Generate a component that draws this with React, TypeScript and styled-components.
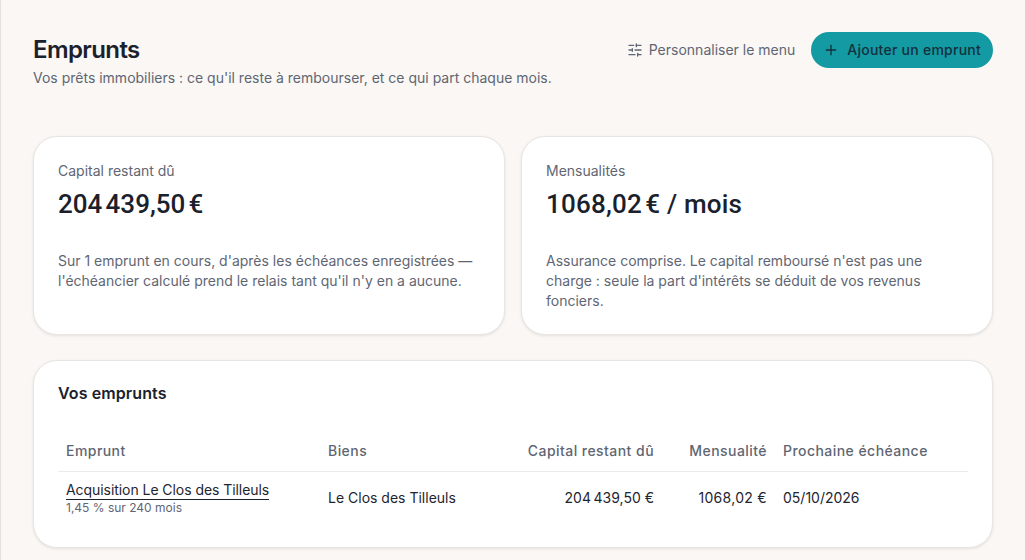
import React from 'react'
import styled, { createGlobalStyle } from 'styled-components'
import { Plus, SlidersHorizontal } from 'lucide-react'

const GlobalStyle = createGlobalStyle`
  html, body {
    margin: 0;
    padding: 0;
    background: #faf7f4;
  }
  body {
    font-family: Inter, "Liberation Sans", sans-serif;
    color: #1e2530;
  }
`

const Page = styled.main`
  box-sizing: border-box;
  height: 560px;
  overflow: hidden;
  padding: 32px 32px 0;
  border-left: 1px solid #e4e2df;
`

const Header = styled.header`
  display: flex;
  justify-content: space-between;
  align-items: flex-start;
  height: 104px;
`

const Title = styled.h1`
  margin: 0;
  font-size: 24px;
  line-height: 36px;
  font-weight: 600;
  letter-spacing: -0.6px;
  color: #1a212c;
`

const Subtitle = styled.p`
  margin: 0;
  font-size: 14px;
  line-height: 20px;
  color: #5f6673;
`

const Actions = styled.div`
  display: flex;
  align-items: center;
  gap: 16px;
`

const MenuLink = styled.a`
  display: flex;
  align-items: center;
  gap: 6px;
  padding-bottom: 1px;
  font-size: 14px;
  color: #5f6673;
`

const AddButton = styled.button`
  display: flex;
  align-items: center;
  gap: 8px;
  height: 36px;
  padding: 0 12px 1px;
  border: 0;
  border-radius: 18px;
  background: #139aa3;
  color: #14303c;
  font-family: inherit;
  font-size: 14px;
  font-weight: 500;
  letter-spacing: 0.25px;
`

const Cards = styled.section`
  display: grid;
  grid-template-columns: 472px 472px;
  gap: 16px;
  margin-bottom: 25px;
`

const Card = styled.article`
  box-sizing: border-box;
  border: 1px solid #e8e6e3;
  border-radius: 24px;
  background: #fff;
  box-shadow: 0 1px 3px rgba(30, 30, 30, 0.1);
  padding: 24px;
`

const StatCard = styled(Card)`
  height: 199px;
`

const StatLabel = styled.div`
  font-size: 14px;
  line-height: 20px;
  color: #5f6673;
`

const StatValue = styled.div`
  margin-top: 5px;
  font-family: Roboto, Inter, sans-serif;
  font-size: 26px;
  line-height: 36px;
  font-weight: 500;
  letter-spacing: 0.2px;
  color: #1a212c;
`

const StatNote = styled.p`
  margin: 29px 0 0;
  font-size: 14px;
  line-height: 20px;
  color: #5f6673;
`

const TableCard = styled(Card)`
  height: 188px;
`

const TableTitle = styled.h2`
  margin: 0 0 26px;
  font-size: 16px;
  line-height: 16px;
  font-weight: 600;
  letter-spacing: 0.1px;
  color: #1a212c;
`

const Table = styled.table`
  width: 910px;
  border-collapse: collapse;
  table-layout: fixed;
`

const Th = styled.th<{ $w: number; $right?: boolean }>`
  width: ${p => p.$w}px;
  padding: 14px 8px 10px;
  height: 44px;
  box-sizing: border-box;
  border-bottom: 1px solid #ecebe8;
  text-align: ${p => (p.$right ? 'right' : 'left')};
  font-size: 14px;
  font-weight: 500;
  letter-spacing: 0.45px;
  color: #5f6673;
`

const Td = styled.td<{ $right?: boolean }>`
  padding: 8px;
  text-align: ${p => (p.$right ? 'right' : 'left')};
  font-size: 14px;
  color: #1e2530;
`

const MonthlyCell = styled(Td)`
  letter-spacing: 0.3px;
`

const LoanCell = styled(Td)`
  padding: 9px 8px 7px;
`

const LoanLink = styled.a`
  display: inline-block;
  line-height: 18px;
  letter-spacing: -0.06px;
  border-bottom: 1px solid #1a212c;
`

const LoanMeta = styled.div`
  font-size: 12px;
  line-height: 16px;
  color: #5f6673;
`

export default function App() {
  return (
    <>
      <GlobalStyle />
      <Page>
        <Header>
          <div>
            <Title>Emprunts</Title>
            <Subtitle>Vos prêts immobiliers : ce qu'il reste à rembourser, et ce qui part chaque mois.</Subtitle>
          </div>
          <Actions>
            <MenuLink>
              <SlidersHorizontal size={16} />
              Personnaliser le menu
            </MenuLink>
            <AddButton>
              <Plus size={16} />
              Ajouter un emprunt
            </AddButton>
          </Actions>
        </Header>
        <Cards>
          <StatCard>
            <StatLabel>Capital restant dû</StatLabel>
            <StatValue>204{'\u202f'}439,50{'\u202f'}€</StatValue>
            <StatNote>
              Sur 1 emprunt en cours, d'après les échéances enregistrées — l'échéancier calculé prend le relais tant
              qu'il n'y en a aucune.
            </StatNote>
          </StatCard>
          <StatCard>
            <StatLabel>Mensualités</StatLabel>
            <StatValue>1068,02{'\u202f'}€ / mois</StatValue>
            <StatNote>
              Assurance comprise. Le capital remboursé n'est pas une charge : seule la part d'intérêts se déduit de vos
              revenus fonciers.
            </StatNote>
          </StatCard>
        </Cards>
        <TableCard>
          <TableTitle>Vos emprunts</TableTitle>
          <Table>
            <thead>
              <tr>
                <Th $w={262}>Emprunt</Th>
                <Th $w={192}>Biens</Th>
                <Th $w={150} $right>Capital restant dû</Th>
                <Th $w={113} $right>Mensualité</Th>
                <Th $w={193}>Prochaine échéance</Th>
              </tr>
            </thead>
            <tbody>
              <tr>
                <LoanCell>
                  <LoanLink>Acquisition Le Clos des Tilleuls</LoanLink>
                  <LoanMeta>1,45 % sur 240 mois</LoanMeta>
                </LoanCell>
                <Td>Le Clos des Tilleuls</Td>
                <Td $right>204{'\u202f'}439,50 €</Td>
                <MonthlyCell $right>1068,02 €</MonthlyCell>
                <Td>05/10/2026</Td>
              </tr>
            </tbody>
          </Table>
        </TableCard>
      </Page>
    </>
  )
}
